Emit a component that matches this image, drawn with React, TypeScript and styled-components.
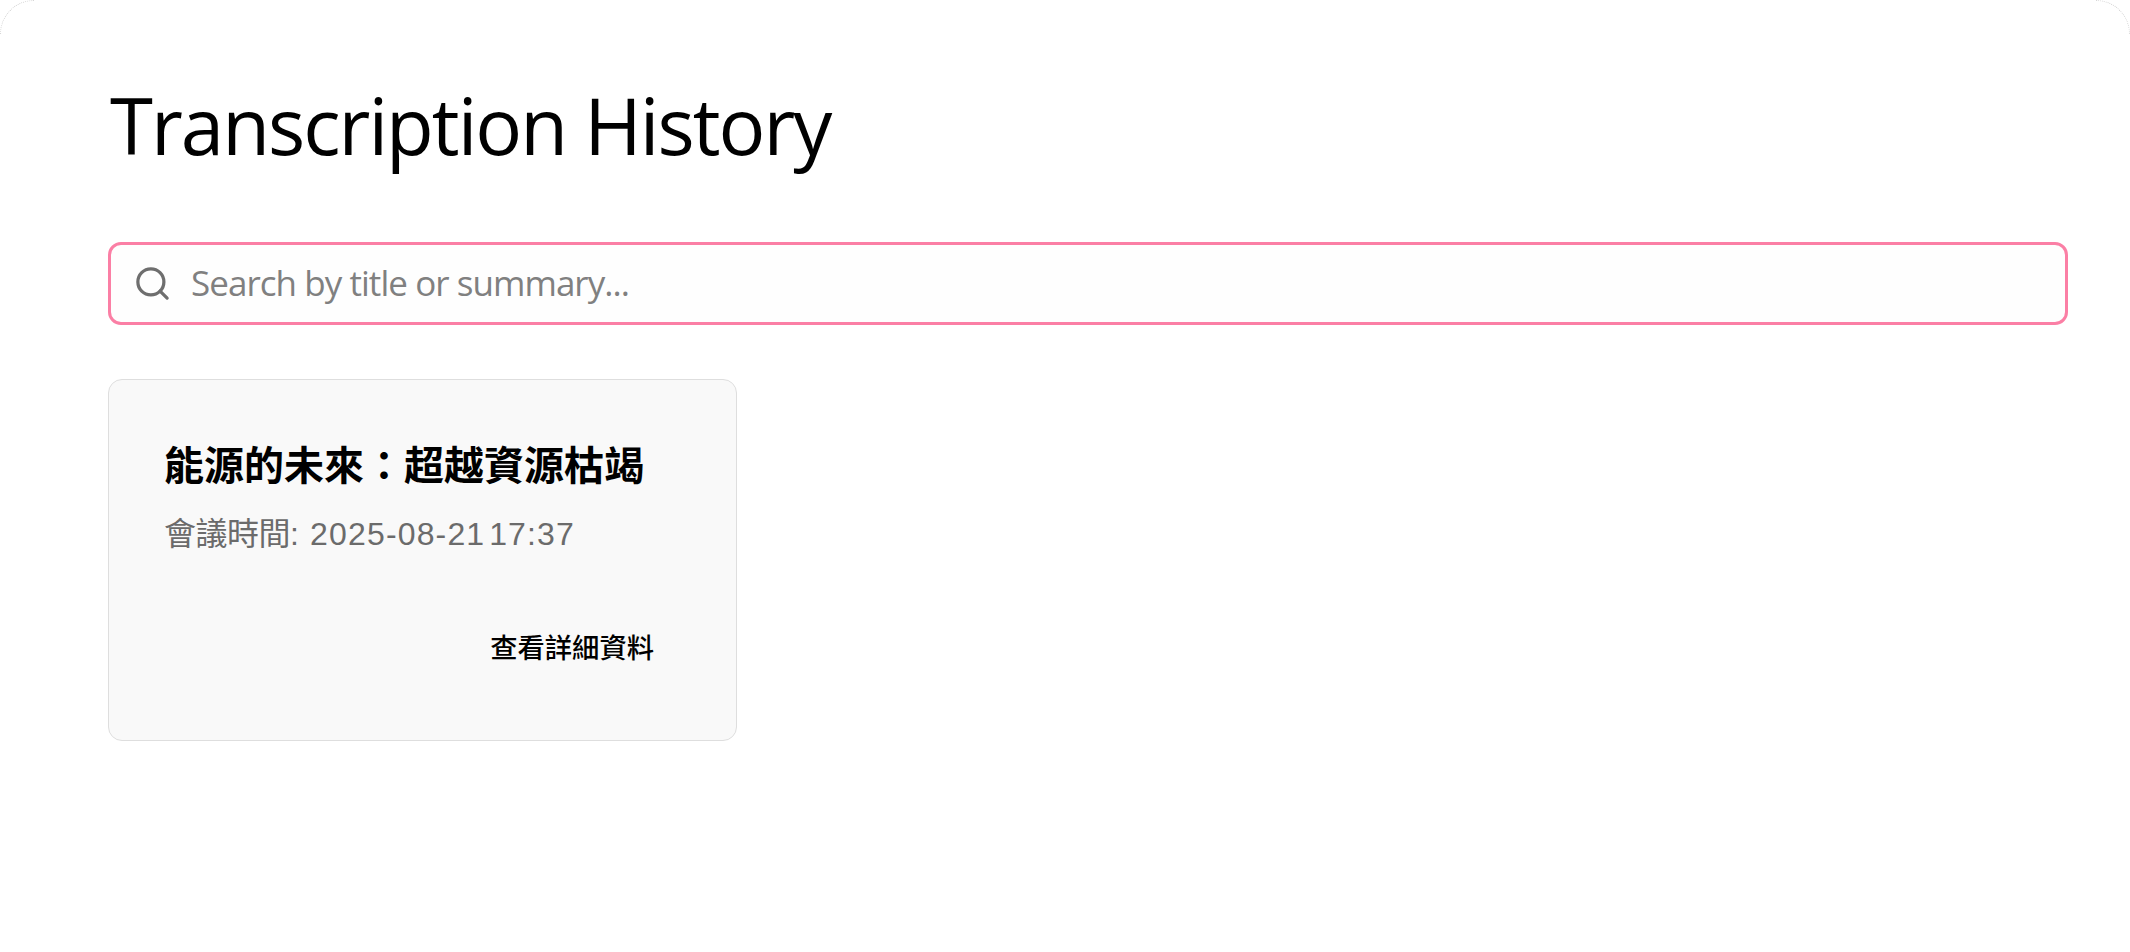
import React from "react";
import styled, { createGlobalStyle } from "styled-components";
import { Search } from "lucide-react";

const GlobalStyle = createGlobalStyle`
  html, body {
    margin: 0;
    height: 100%;
    background: #fff;
  }
`;

const Page = styled.div`
  position: relative;
  box-sizing: border-box;
  width: 2130px;
  height: 952px;
  background: #fff;
  padding: 72px 62px 0 108px;
  font-family: "Open Sans", "Noto Sans", sans-serif;
`;

const Corner = styled.span<{ $side: "left" | "right" }>`
  position: absolute;
  top: 0;
  ${(p) => p.$side}: 0;
  box-sizing: border-box;
  width: 34px;
  height: 34px;
  border-top: 1px dotted #d4d4d4;
  border-${(p) => p.$side}: 1px dotted #d4d4d4;
  border-top-${(p) => p.$side}-radius: 34px;
`;

const Title = styled.h1`
  margin: 0 0 0 2px;
  font-size: 78px;
  line-height: 106px;
  font-weight: 400;
  color: #000;
  letter-spacing: -2px;
`;

const SearchBar = styled.label`
  box-sizing: border-box;
  display: flex;
  align-items: center;
  gap: 19px;
  height: 83px;
  margin-top: 64px;
  padding: 0 22px;
  background: #fefefe;
  border: 3px solid #fb7fa5;
  border-radius: 13px;
  color: #6e6e6e;
`;

const SearchInput = styled.input`
  flex: 1;
  border: 0;
  outline: 0;
  padding: 0 0 2px;
  background: transparent;
  font: inherit;
  font-size: 35px;
  letter-spacing: -0.95px;
  color: #000;
  &::placeholder {
    color: #808080;
  }
`;

const Grid = styled.div`
  display: grid;
  grid-template-columns: 629px;
  margin-top: 54px;
`;

const Card = styled.article`
  box-sizing: border-box;
  height: 362px;
  padding: 58px 55px 0;
  background: #f9f9f9;
  border: 1px solid #dedede;
  border-radius: 14px;
  display: flex;
  flex-direction: column;
`;

const CardTitle = styled.h2`
  margin: 0;
  font-family: "Noto Sans CJK TC", sans-serif;
  font-size: 40px;
  line-height: 50px;
  font-weight: 700;
  color: #000;
`;

const CardMeta = styled.p`
  margin: 26px 0 0;
  font-family: "Liberation Sans", "Noto Sans CJK TC", sans-serif;
  font-size: 32px;
  line-height: 40px;
  letter-spacing: 1.15px;
  color: #6b6b6b;
`;

const MetaLabel = styled.span`
  letter-spacing: -0.5px;
`;

const CardLink = styled.a`
  margin: auto 27px 77px auto;
  font-family: "Noto Sans CJK TC", sans-serif;
  font-size: 27.3px;
  line-height: 34px;
  font-weight: 500;
  color: #000;
`;

export default function App() {
  return (
    <>
      <GlobalStyle />
      <Page>
        <Corner $side="left" />
        <Corner $side="right" />
        <Title>Transcription History</Title>
        <SearchBar>
          <Search size={39} strokeWidth={2} />
          <SearchInput placeholder="Search by title or summary..." />
        </SearchBar>
        <Grid>
          <Card>
            <CardTitle>能源的未來：超越資源枯竭</CardTitle>
            <CardMeta>
              <MetaLabel>會議時間</MetaLabel>: 2025-08-21{"\u200a"}17:37
            </CardMeta>
            <CardLink>查看詳細資料</CardLink>
          </Card>
        </Grid>
      </Page>
    </>
  );
}
